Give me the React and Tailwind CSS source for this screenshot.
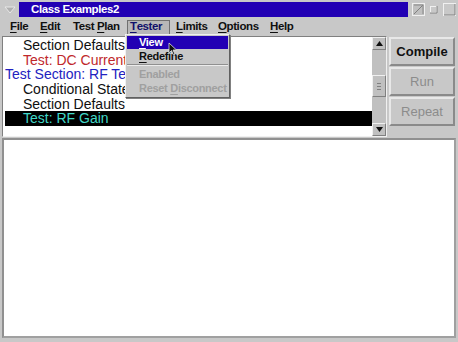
import React from "react";

const font = { fontFamily: '"Liberation Sans", Arial, sans-serif' };

const Under = ({ label, u }) => (
  <>
    {label.slice(0, u)}
    <span className="underline underline-offset-2">{label[u]}</span>
    {label.slice(u + 1)}
  </>
);

const MenuItem = ({ label, u, active, w, extra = "" }) => (
  <span
    className={
      "h-[15px] flex items-center pl-[2px] text-[11.5px] font-bold tracking-[-0.4px] whitespace-pre " +
      extra +
      (active ? " border border-[#707070] bg-[#b8b8b8] text-[#10106a]" : " border border-transparent text-[#101010]")
    }
    style={{ width: w }}
  >
    <Under label={label} u={u} />
  </span>
);

const ListLine = ({ text, color, indent, selected }) => (
  <div
    className={
      "h-[14.7px] leading-[14.7px] text-[14px] whitespace-nowrap " +
      (selected ? "bg-black" : "")
    }
    style={{ color, paddingLeft: indent }}
  >
    {text}
  </div>
);

const SideButton = ({ label, disabled }) => (
  <div
    className={
      "h-[29px] flex items-center justify-center text-[13px] border-2 border-t-[#e8e8e8] border-l-[#e8e8e8] border-b-[#8a8a8a] border-r-[#8a8a8a] " +
      (disabled ? "text-[#8c8c8c]" : "text-[#101010] font-bold")
    }
  >
    {label}
  </div>
);

export default function App() {
  return (
    <div className="w-[458px] h-[342px] bg-[#c8c8c8] flex flex-col relative overflow-hidden" style={font}>
      {/* title bar */}
      <div className="h-[19px] flex items-center">
        <div className="w-[19px] h-[19px] flex items-center justify-center">
          <svg width="12" height="10" viewBox="0 0 12 10">
            <path d="M1 2 L11 2 L6 8 Z" fill="#b0b0b0" stroke="#e8e8e8" strokeWidth="1" />
          </svg>
        </div>
        <div className="flex-1 h-[15px] bg-[#2200b4] flex items-center pl-[12px] text-white text-[11.5px] font-bold tracking-[-0.4px]">
          Class Examples2
        </div>
        <div className="w-[50px] flex items-center justify-around pl-[2px]">
          <svg width="13" height="13" viewBox="0 0 13 13">
            <rect x="0.5" y="0.5" width="12" height="12" fill="#c0c0c0" stroke="#f0f0f0" />
            <path d="M2 11 L11 2" stroke="#808080" />
            <path d="M2 2 L11 2 L11 11" stroke="#888" fill="none" />
          </svg>
          <svg width="9" height="9" viewBox="0 0 9 9">
            <rect x="1.5" y="1.5" width="6" height="6" fill="none" stroke="#f0f0f0" />
            <path d="M1 8 L8 8 L8 1" stroke="#808080" fill="none" />
          </svg>
          <svg width="13" height="13" viewBox="0 0 13 13">
            <rect x="0.5" y="0.5" width="12" height="12" fill="#c8c8c8" stroke="#f0f0f0" />
            <path d="M1 12 L12 12 L12 1" stroke="#808080" fill="none" />
          </svg>
        </div>
      </div>

      {/* menu bar */}
      <div className="h-[16px] flex items-center pl-[7px]">
        <MenuItem label="File" u={0} w={30} />
        <MenuItem label="Edit" u={0} w={33} />
        <MenuItem label="Test Plan" u={5} w={57} />
        <MenuItem label="Tester" u={0} w={43} active />
        <MenuItem label="Limits" u={0} w={42} extra="ml-[3px]" />
        <MenuItem label="Options" u={0} w={52} />
        <MenuItem label="Help" u={0} w={30} />
      </div>

      {/* top area */}
      <div className="h-[101px] flex mt-[1px] px-[2px]">
        <div className="w-[385px] flex border border-t-[#808080] border-l-[#808080] border-b-[#f0f0f0] border-r-[#f0f0f0]">
          <div className="flex-1 bg-white pt-[1px] pl-[2px] overflow-hidden">
            <ListLine text="Section Defaults" color="#101010" indent={18} />
            <ListLine text="Test: DC Current" color="#c0282c" indent={18} />
            <ListLine text="Test Section: RF Test" color="#2222c0" indent={0} />
            <ListLine text="Conditional Statement" color="#101010" indent={18} />
            <ListLine text="Section Defaults" color="#101010" indent={18} />
            <ListLine text="Test: RF Gain" color="#40d8c8" indent={18} selected />
          </div>
          <div className="w-[14px] bg-[#c0c0c0] flex flex-col">
            <div className="h-[13px] flex items-center justify-center border border-t-[#f0f0f0] border-l-[#f0f0f0] border-b-[#808080] border-r-[#808080]">
              <svg width="7" height="5" viewBox="0 0 7 5"><path d="M3.5 0 L7 5 L0 5 Z" fill="#101010" /></svg>
            </div>
            <div className="h-[25px]" />
            <div className="h-[22px] flex items-center justify-center border border-t-[#f0f0f0] border-l-[#f0f0f0] border-b-[#808080] border-r-[#808080]">
              <div className="w-[4px] h-[7px] border-t border-b border-[#808080] flex items-center"><div className="w-full h-px bg-[#808080]" /></div>
            </div>
            <div className="flex-1" />
            <div className="h-[13px] flex items-center justify-center border border-t-[#f0f0f0] border-l-[#f0f0f0] border-b-[#808080] border-r-[#808080]">
              <svg width="7" height="5" viewBox="0 0 7 5"><path d="M0 0 L7 0 L3.5 5 Z" fill="#101010" /></svg>
            </div>
          </div>
        </div>
        <div className="flex-1 flex flex-col pl-[2px] pr-[1px] pt-[1px] gap-[1px]">
          <SideButton label="Compile" />
          <SideButton label="Run" disabled />
          <SideButton label="Repeat" disabled />
        </div>
      </div>

      {/* bottom panel */}
      <div className="flex-1 mx-[2px] mt-[1px] mb-[4px] bg-white border-2 border-t-[#909090] border-l-[#909090] border-b-[#a0a0a0] border-r-[#a0a0a0]" />

      {/* dropdown menu */}
      <div className="absolute left-[125px] top-[34px] w-[105px] h-[64px] bg-[#c8c8c8] border border-t-[#f0f0f0] border-l-[#f0f0f0] border-b-[#606060] border-r-[#606060] shadow-[1px_1px_0_#808080] pt-[1px] px-[1px] text-[11px] font-bold tracking-[-0.3px]">
        <div className="h-[13px] bg-[#2200b4] text-white pl-[12px] leading-[13px]">
          <Under label="View" u={0} />
        </div>
        <div className="h-[14px] text-[#101010] pl-[12px] leading-[15px]">
          <Under label="Redefine" u={0} />
        </div>
        <div className="mt-[1px] mb-[1px] border-t border-t-[#909090] border-b border-b-[#ececec]" />
        <div className="h-[14px] text-[#a0a0a0] pl-[12px] leading-[14px]">Enabled</div>
        <div className="h-[14px] text-[#a0a0a0] pl-[12px] leading-[14px] whitespace-pre">
          <Under label="Reset Disconnect" u={6} />
        </div>
      </div>

      {/* mouse cursor */}
      <svg className="absolute left-[168px] top-[42px]" width="10" height="14" viewBox="0 0 10 14">
        <path d="M1 1 L1 11 L3.5 8.5 L5.5 13 L7 12.3 L5 8 L8.5 8 Z" fill="#101010" stroke="#e0e0e0" strokeWidth="0.8" />
      </svg>
    </div>
  );
}
